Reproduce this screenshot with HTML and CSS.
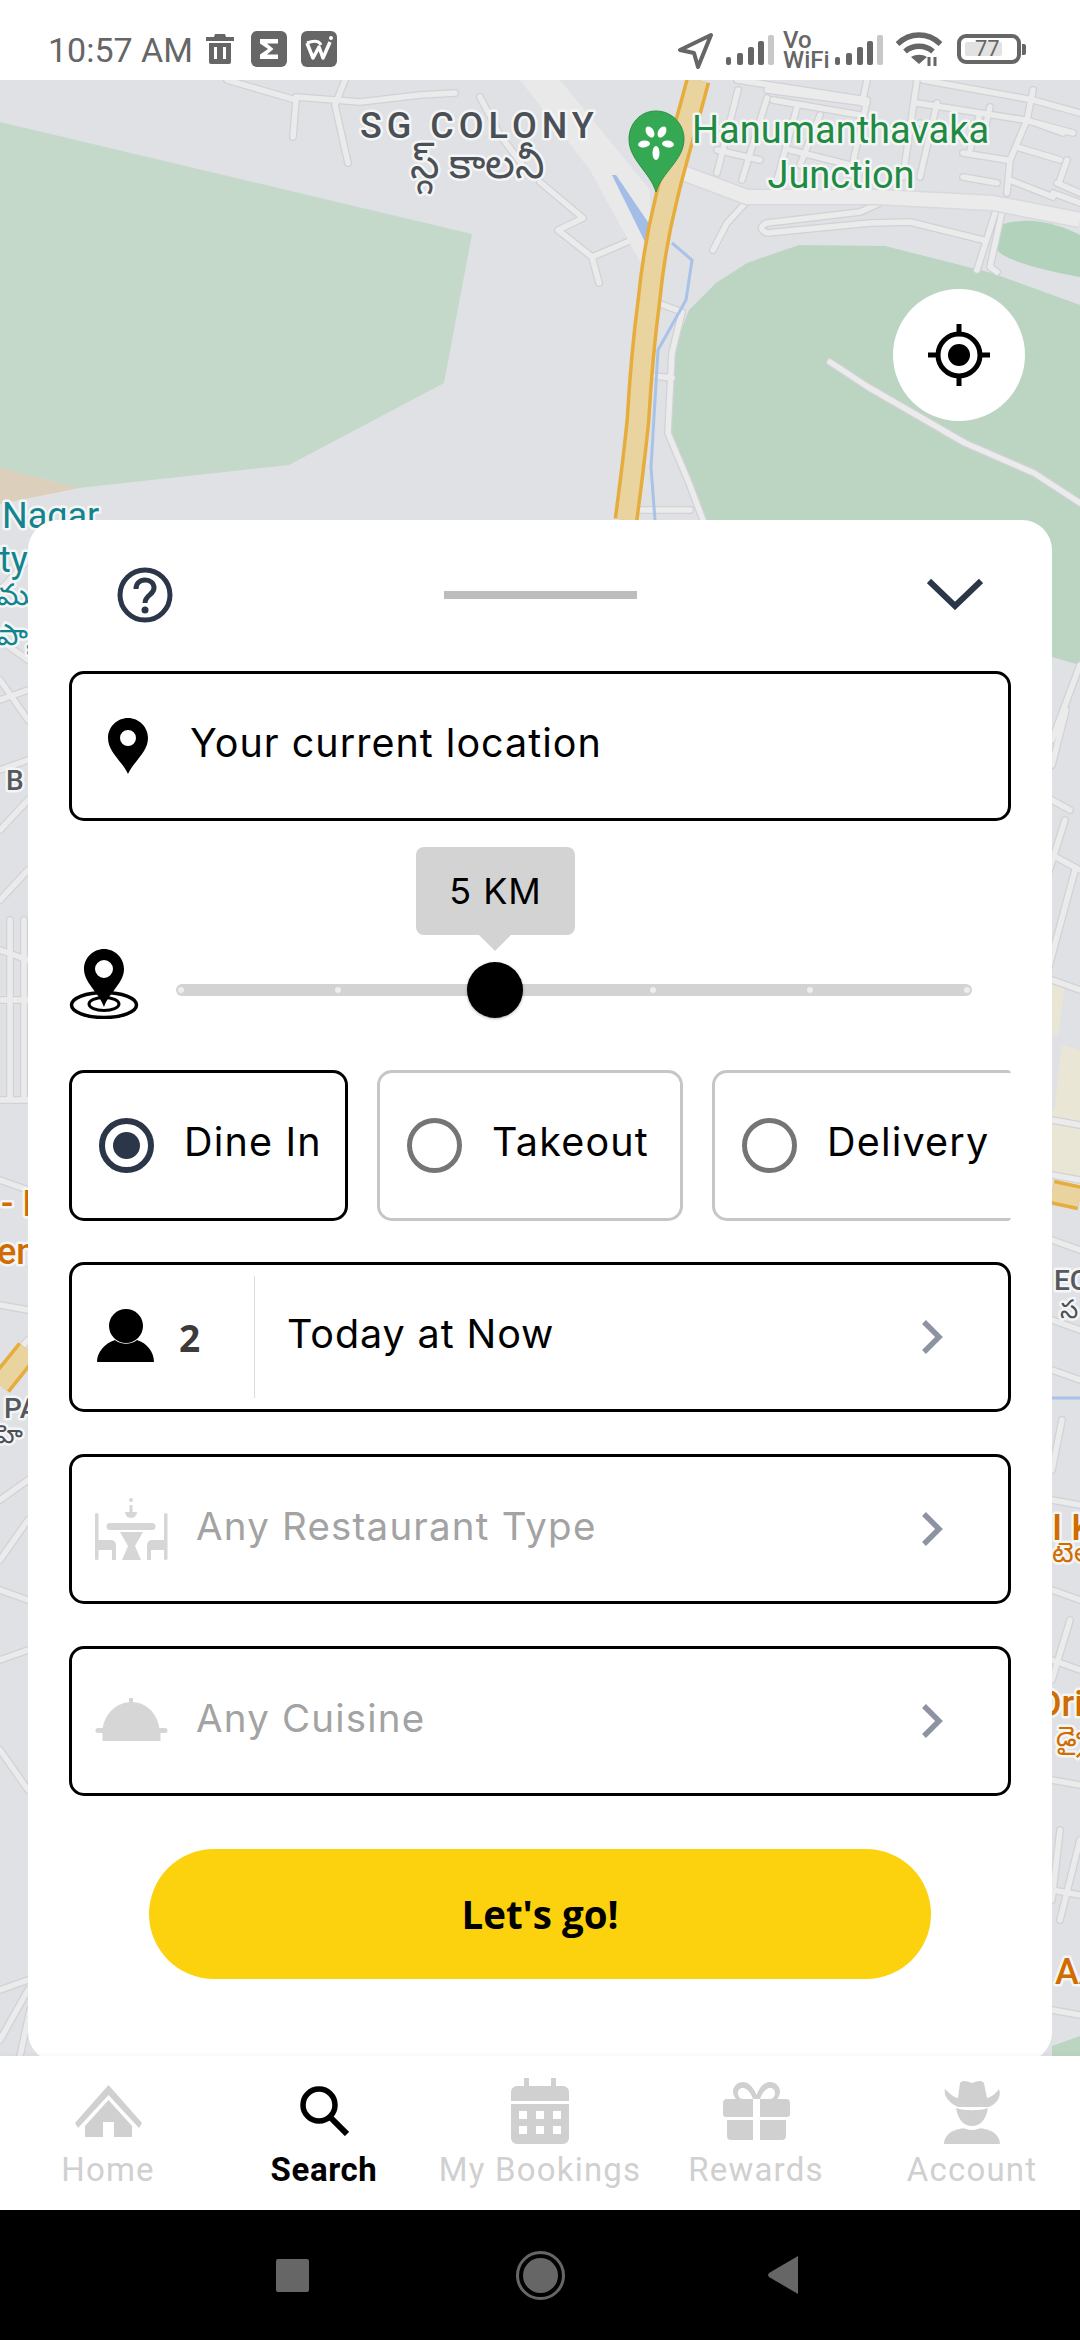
FILE: index.html
```html
<!DOCTYPE html>
<html lang="en">
<head>
<meta charset="utf-8">
<title>Search</title>
<link rel="stylesheet" href="styles.css">
</head>
<body>
<div class="screen">
  <header class="status">
    <div class="status-left">
      <span class="clock">10:57 AM</span>
      <svg class="st-trash" viewBox="0 0 28 30"><path d="M9 0h10l1 3h8v4H0V3h8zM3 9h22v19a2 2 0 0 1-2 2H5a2 2 0 0 1-2-2zm5 4v12h3V13zm9 0v12h3V13z" fill="#666"/></svg>
      <span class="tile"><svg viewBox="0 0 36 36"><path d="M9 8h18v4.500H16l6.500 5.500-6.500 5.500h11V28H9v-4.500l8-5.500-8-5.500z" fill="#fff"/></svg></span>
      <span class="tile"><svg viewBox="0 0 36 36"><path d="M6 12l6 15 6-11 4 11 7-16" fill="none" stroke="#fff" stroke-width="3.500" stroke-linejoin="round"/><path d="M6 12c8-3 12-2 14 2" fill="none" stroke="#fff" stroke-width="3"/><circle cx="30" cy="7" r="2" fill="#fff"/></svg></span>
    </div>
    <div class="status-right">
      <svg class="st-arrow" viewBox="0 0 37 37"><path d="M34 3L3 18l14 3 4 14z" fill="none" stroke="#666" stroke-width="4" stroke-linejoin="round"/></svg>
      <svg class="st-signal" viewBox="0 0 48 30"><g fill="#666"><rect x="0" y="22" width="5" height="8" rx="2"/><rect x="11" y="18" width="6" height="12" rx="2"/><rect x="22" y="12" width="6" height="18" rx="2"/><rect x="32" y="6" width="6" height="24" rx="2"/></g><rect x="42" y="0" width="6" height="30" rx="2" fill="#c8c8c8"/></svg>
      <span class="vowifi"><span>Vo</span><span>WiFi</span></span>
      <svg class="st-signal" viewBox="0 0 48 30"><g fill="#666"><rect x="0" y="22" width="5" height="8" rx="2"/><rect x="11" y="18" width="6" height="12" rx="2"/><rect x="22" y="12" width="6" height="18" rx="2"/><rect x="32" y="6" width="6" height="24" rx="2"/></g><rect x="42" y="0" width="6" height="30" rx="2" fill="#c8c8c8"/></svg>
      <svg class="st-wifi" viewBox="0 0 46 34"><g fill="none" stroke="#666" stroke-width="5.500"><path d="M1.500 12C14 0 32 0 44.500 12"/><path d="M9 19.500c8-7 20-7 28 0"/></g><path d="M15 25c5-3 11-3 16 0l-8 7z" fill="#666"/><path d="M33 25v9M39 25v9" stroke="#666" stroke-width="3"/></svg>
      <span class="battery"><span class="battery-fill"></span><span class="battery-num">77</span></span>
      <span class="battery-tip"></span>
    </div>
  </header>

  <main class="stage">
    <svg class="map" viewBox="0 80 1080 1976" preserveAspectRatio="none">
      <defs>
        <g id="minor">
          <path d="M227 80L296 100L293 137M296 97L360 102L420 95L455 93M345 80L335 105L348 163M480 97L500 135L530 175M579 220L558 230L592 257L599 283M592 257L632 240L625 225M540 182L583 218L579 220"/>
          <path d="M767 223L860 212L880 203M767 223Q756 228 767 233L870 223L910 222L983 240M750 198L727 223L713 250M997 207L977 270M1003 207L990 267L997 272"/>
          <path d="M738 90L717 173M767 98L742 180M797 107L777 180M867 80L862 103M917 80L903 177M937 103L920 177M990 107L983 137M1033 90L1027 120L1010 160L1007 193M1067 160L1060 180M820 115L800 165M866 105L850 175"/>
          <path d="M737 80L867 100M767 90L867 103M773 100L860 115M923 80L1033 100L1080 113M917 103L980 113L1025 120L1073 133M920 123L960 137M1017 147L1060 160M963 153L1007 160M963 177L997 183M1010 180L1053 197M1053 193L1080 203M1057 183L1080 193M1027 120L1063 133M980 113L970 150M717 150L760 160M790 150L850 165"/>
          <path d="M658 303L682 312L672 353L668 433L689 483L703 520M830 362L868 387L965 443L1034 473L1080 503M634 510L690 510M655 376L672 378"/>
          <path d="M0 590L28 560M0 640L28 660M0 680L28 720M0 700L28 690M0 770L28 760M0 830L28 800M0 900L28 870M0 950L28 960M10 920L10 1100M24 920L24 1100M0 1100L28 1100M0 1000L28 1000M0 1180L28 1190M0 1305L28 1310M0 1370L28 1340M0 1500L28 1480M0 1560L28 1520M0 1590L28 1600M0 1660L28 1650M0 1750L28 1790M0 1990L28 1980M0 2040L28 1990M20 2056L30 2010"/>
          <path d="M1052 740L1080 665M1052 765L1066 710M1052 800L1070 810M1052 855L1080 870M1065 820L1040 900M1052 980L1080 990M1075 870L1040 1000M1052 1120L1080 1125M1052 1175L1080 1180M1052 1240L1080 1250M1052 1320L1080 1330M1052 1370L1080 1380M1062 1420L1052 1470M1052 1500L1080 1505M1052 1590L1080 1600M1070 1620L1052 1680M1052 1660L1080 1670M1052 1780L1080 1785M1060 1830L1052 1900M1080 1840L1060 1920M1052 1890L1080 1895M1052 2010L1080 2015"/>
        </g>
        <g id="major">
          <path d="M683 173L747 197L877 197L993 203L1080 220"/>
        </g>
      </defs>
      <rect class="m-land" x="0" y="80" width="1080" height="1976"/>
      <path class="m-green-a" d="M0 122L472 234L444 383L289 465L79 488L0 468z"/>
      <path class="m-beige" d="M0 468L79 488L0 504z"/>
      <path class="m-green-b" d="M799 245L885 246L992 273L1080 305V665L1052 657L703 520L672 433V353L689 310L716 283L747 263z"/>
      <path class="m-green-c" d="M1000 225C1030 215 1060 225 1080 235V277C1040 270 1005 260 997 250z"/>
      <path class="m-green-b" d="M1052 2056V2046L1080 2036V2056z"/>
      <path class="m-beige2" d="M1052 985H1065L1058 1035H1052zM1052 1130L1062 1045L1080 1050V1120L1070 1140zM1052 1110L1080 1120V1190L1052 1180z"/>
      <use href="#minor" class="m-casing"/>
      <use href="#minor" class="m-road"/>
      <use href="#major" class="m-casing-major"/>
      <use href="#major" class="m-road-major"/>
      <path class="m-band" d="M520 80H560L650 190V262L640 262L590 170z"/>
      <path class="m-water" d="M612 175L616 175L652 228L648 248z"/>
      <path class="m-stream" d="M672 243L692 260L686 300L658 350L651 467L655 520M1052 1398H1080"/>
      <path class="m-hw-edge" d="M698 80C685 130 674 165 666 200C656 240 652 270 649 300C643 345 640 385 638 420C634 460 630 490 626 520"/>
      <path class="m-hw" d="M698 80C685 130 674 165 666 200C656 240 652 270 649 300C643 345 640 385 638 420C634 460 630 490 626 520"/>
      <path class="m-hw-edge" d="M0 1385L28 1350M1052 1192L1080 1198"/>
      <path class="m-hw" d="M0 1385L28 1350M1052 1192L1080 1198"/>
      <path class="m-pin" d="M656 111C640 111 629 124 629 139C629 160 650 172 656 192C662 172 684 160 684 139C684 124 672 111 656 111z"/>
      <g class="m-petal"><ellipse cx="656" cy="153" rx="3.500" ry="7"/><ellipse cx="644" cy="144" rx="6" ry="3.500" transform="rotate(-8 644 144)"/><ellipse cx="668" cy="144" rx="6" ry="3.500" transform="rotate(8 668 144)"/><ellipse cx="650" cy="132" rx="3.800" ry="6" transform="rotate(-30 650 132)"/><ellipse cx="662" cy="132" rx="3.800" ry="6" transform="rotate(30 662 132)"/></g>
      <text class="m-t m-area" x="360" y="138">SG COLONY</text>
      <text class="m-t m-tel m-grey" x="477" y="178" text-anchor="middle">స్గ్ కాలనీ</text>
      <text class="m-t m-poi" x="692" y="143">Hanumanthavaka</text>
      <text class="m-t m-poi" x="841" y="188" text-anchor="middle">Junction</text>
      <text class="m-t m-teal" x="2" y="528">Nagar</text>
      <text class="m-t m-teal" x="-1" y="572">ty</text>
      <text class="m-t m-tel m-teal2" x="-3" y="605">ముఖ్య</text>
      <text class="m-t m-tel m-teal2" x="-3" y="645">ప్యా</text>
      <text class="m-t m-b" x="6" y="790">B</text>
      <text class="m-t m-orange" x="1" y="1216">- I</text>
      <text class="m-t m-orange" x="-3" y="1264">en</text>
      <text class="m-t m-b" x="4" y="1418">PA</text>
      <text class="m-t m-tel m-grey2" x="-4" y="1443">హె</text>
      <text class="m-t m-b" x="1054" y="1290">EC</text>
      <text class="m-t m-tel m-grey2" x="1060" y="1318">స</text>
      <text class="m-t m-orange" x="1052" y="1540">I K</text>
      <text class="m-t m-tel m-or2" x="1052" y="1562">టెల</text>
      <text class="m-t m-orange" x="1038" y="1716">Dri</text>
      <text class="m-t m-tel m-or2" x="1056" y="1746">డ్రై</text>
      <text class="m-t m-orange" x="1055" y="1984">AA</text>
    </svg>

    <button class="locate" type="button">
      <svg viewBox="0 0 62 62"><circle cx="31" cy="31" r="21" fill="none" stroke="#000" stroke-width="5"/><circle cx="31" cy="31" r="11" fill="#000"/><path d="M31 0v12M31 50v12M0 31h12M50 31h12" stroke="#000" stroke-width="5"/></svg>
    </button>

    <section class="sheet">
      <div class="sheet-head">
        <svg class="help" viewBox="0 0 56 56"><circle cx="28" cy="28" r="25" fill="none" stroke="#2b3648" stroke-width="5"/><path d="M19 22c0-6 4-9 9-9s9 3 9 8c0 7-9 7-9 15" fill="none" stroke="#2b3648" stroke-width="5"/><circle cx="28" cy="43" r="3.500" fill="#2b3648"/></svg>
        <span class="grabber"></span>
        <svg class="collapse" viewBox="0 0 56 32"><path d="M2 3l26 25L54 3" fill="none" stroke="#2b3648" stroke-width="6"/></svg>
      </div>

      <div class="field">
        <svg class="i-pin" viewBox="0 0 40 56"><path fill-rule="evenodd" d="M20 0C9 0 0 9 0 20c0 14 14 23 20 36 6-13 20-22 20-36C40 9 31 0 20 0zm0 12a8 8 0 1 1 0 16 8 8 0 0 1 0-16z" fill="#000"/></svg>
        <span class="field-text">Your current location</span>
      </div>

      <div class="slider">
        <svg class="i-radius" viewBox="0 0 70 70"><path fill-rule="evenodd" d="M35 0C24 0 15 9 15 20c0 14 14 22 20 38 6-16 20-24 20-38C55 9 46 0 35 0zm0 11a9 9 0 1 1 0 18 9 9 0 0 1 0-18z" fill="#000"/><ellipse cx="35" cy="56" rx="32.500" ry="12.500" fill="none" stroke="#000" stroke-width="3.500"/><ellipse cx="35" cy="55" rx="15" ry="6.500" fill="none" stroke="#000" stroke-width="3"/></svg>
        <div class="track">
          <span class="tick"></span><span class="tick"></span><span class="tick tick-hidden"></span><span class="tick"></span><span class="tick"></span><span class="tick"></span>
          <span class="thumb"></span>
          <span class="bubble">5 KM</span>
        </div>
      </div>

      <div class="modes">
        <div class="mode mode-dine mode-on"><span class="radio radio-on"></span><span class="mode-label">Dine In</span></div>
        <div class="mode mode-take"><span class="radio"></span><span class="mode-label">Takeout</span></div>
        <div class="mode mode-deliv"><span class="radio"></span><span class="mode-label">Delivery</span></div>
      </div>

      <div class="rows">
        <div class="row">
          <div class="party">
            <svg class="i-person" viewBox="0 0 57 53"><circle cx="29" cy="17" r="17" fill="#000"/><path d="M18 31c6 5 16 5 22 0 10 3 17 12 17 22H0c0-10 8-19 18-22z" fill="#000"/></svg>
            <span class="party-num">2</span>
          </div>
          <span class="row-text row-text-when">Today at Now</span>
          <svg class="chev" viewBox="0 0 22 34"><path d="M3 2l15 15L3 32" fill="none" stroke="#8e93a3" stroke-width="5.500"/></svg>
        </div>
        <div class="row">
          <svg class="i-table" viewBox="0 0 73 62"><g fill="#d6d6d6"><rect x="34" y="0" width="4" height="4" rx="2"/><rect x="34.500" y="7" width="3" height="8"/><path d="M30 14h12a6 6 0 0 1-12 0z"/><path d="M15 25h42a3.500 3.500 0 0 1 0 7H15a3.500 3.500 0 0 1 0-7z"/><path d="M25 34h23l-8 14 6 14H27l6-14z"/><rect x="0" y="15" width="3.500" height="47" rx="1.500"/><rect x="69" y="15" width="3.500" height="47" rx="1.500"/><path d="M3 42h13a5 5 0 0 1 5 5v15h-4V52H3zM69 42H57a5 5 0 0 0-5 5v15h4V52h13z"/></g></svg>
          <span class="row-text row-text-muted">Any Restaurant Type</span>
          <svg class="chev" viewBox="0 0 22 34"><path d="M3 2l15 15L3 32" fill="none" stroke="#8e93a3" stroke-width="5.500"/></svg>
        </div>
        <div class="row">
          <svg class="i-cloche" viewBox="0 0 72 43"><g fill="#d6d6d6"><rect x="33.500" y="0" width="4" height="6"/><path d="M36 4c14 0 26 11 28 27H7C9 15 22 4 36 4z"/><rect x="0" y="30" width="72" height="5" rx="2.500"/><rect x="7" y="35" width="58" height="8"/></g></svg>
          <span class="row-text row-text-muted">Any Cuisine</span>
          <svg class="chev" viewBox="0 0 22 34"><path d="M3 2l15 15L3 32" fill="none" stroke="#8e93a3" stroke-width="5.500"/></svg>
        </div>
      </div>

      <button class="go" type="button">Let's go!</button>
    </section>
  </main>

  <nav class="tabs">
    <div class="tab">
      <span class="tab-icon"><svg class="ti-home" viewBox="0 0 67 52"><g fill="#d0d0d0"><path d="M33.500 0L67 38l-3 5L33.500 10 3 43l-3-5z"/><path d="M33.500 15L57 41v11H39V37H28v15H10V41z"/></g></svg></span>
      <span class="tab-label">Home</span>
    </div>
    <div class="tab tab-on">
      <span class="tab-icon"><svg class="ti-search" viewBox="0 0 50 50"><circle cx="20" cy="19" r="16" fill="none" stroke="#000" stroke-width="5.500"/><path d="M31 31l17 17" stroke="#000" stroke-width="6"/></svg></span>
      <span class="tab-label">Search</span>
    </div>
    <div class="tab">
      <span class="tab-icon"><svg class="ti-cal" viewBox="0 0 58 66"><path fill-rule="evenodd" fill="#d0d0d0" d="M13 0h5v8h22V0h5v8h7a6 6 0 0 1 6 6v9H0v-9a6 6 0 0 1 6-6h7zM0 26h58v34a6 6 0 0 1-6 6H6a6 6 0 0 1-6-6zm8 7v8h8v-8zm17 0v8h8v-8zm17 0v8h8v-8zM8 48v8h8v-8zm17 0v8h8v-8zm17 0v8h8v-8z"/></svg></span>
      <span class="tab-label">My Bookings</span>
    </div>
    <div class="tab">
      <span class="tab-icon"><svg class="ti-gift" viewBox="0 0 67 58"><g fill="#d0d0d0"><path fill-rule="evenodd" d="M33.500 13C30 4 25 0 20 0c-6 0-10 5-10 9 0 3 1 6 3 8H4a4 4 0 0 0-4 4v11a3 3 0 0 0 3 3h27V17h7v18h27a3 3 0 0 0 3-3V21a4 4 0 0 0-4-4h-9c2-2 3-5 3-8 0-4-4-9-10-9-5 0-10 4-13.500 13zM20 6c4 0 8 5 10 11H20c-3 0-5-3-5-6s2-5 5-5zm27 0c3 0 5 2 5 5s-2 6-5 6H37c2-6 6-11 10-11z"/><path d="M4 38h26v20H8a4 4 0 0 1-4-4zM37 38h26v16a4 4 0 0 1-4 4H37z"/></g></svg></span>
      <span class="tab-label">Rewards</span>
    </div>
    <div class="tab">
      <span class="tab-icon"><svg class="ti-acc" viewBox="0 0 58 66"><g fill="#d0d0d0"><path d="M17 5c3-3 6-2 12 0 6-2 9-3 12 0l3 15c5-1 9-5 12-9 3 8-3 15-10 18H15C8 26 0 19 2 11c4 4 8 8 13 9z"/><path d="M13 30c8 3 24 3 32 0-2 11-7 18-16 18S15 41 13 30z"/><path d="M29 52c6 0 9-3 12-1 9 1 16 7 16 15H1c0-8 7-14 16-15 3-2 6 1 12 1z"/></g></svg></span>
      <span class="tab-label">Account</span>
    </div>
  </nav>

  <footer class="sysbar">
    <span class="sys-square"></span>
    <span class="sys-home"><span class="sys-home-dot"></span></span>
    <svg class="sys-back" viewBox="0 0 32 38"><path d="M31 0v38L2 21a3 3 0 0 1 0-4z" fill="#666"/></svg>
  </footer>
</div>
</body>
</html>
```

FILE: styles.css
```css
* { box-sizing: border-box; }
html, body { margin: 0; padding: 0; }
body { width: 1080px; height: 2340px; overflow: hidden; font-family: "Inter", "Noto Sans", sans-serif; background: #fff; }
.screen { width: 1080px; height: 2340px; display: flex; flex-direction: column; }

/* status bar */
.status { height: 80px; flex: none; display: flex; justify-content: space-between; background: #fff; color: #666; padding: 31px 54px 0 48px; }
.status-left { display: flex; align-items: flex-start; }
.clock { font: 400 34px/37px "Roboto", sans-serif; margin-top: 1px; }
.st-trash { width: 28px; height: 30px; margin: 3px 0 0 13px; }
.tile { width: 36px; height: 36px; border-radius: 6px; background: #666; margin-left: 17px; display: block; }
.tile svg { display: block; width: 36px; height: 36px; }
.tile + .tile { margin-left: 14px; }
.status-right { display: flex; align-items: flex-start; }
.st-arrow { width: 37px; height: 37px; margin-top: 1px; }
.st-signal { width: 48px; height: 30px; margin: 4px 0 0 12px; }
.vowifi { display: flex; flex-direction: column; width: 44px; margin-left: 9px; font: 500 24px/20px "Roboto", sans-serif; margin-top: -1px; color: #666; white-space: nowrap; }
.vowifi + .st-signal { margin-left: 8px; }
.st-wifi { width: 46px; height: 34px; margin: 1px 0 0 13px; }
.battery { width: 64px; height: 30px; margin: 3px 0 0 15px; border: 4px solid #666; border-radius: 9px; position: relative; display: block; }
.battery-fill { display: block; width: 37px; height: 14px; margin: 4px 0 0 4px; background: #e2e2e2; border-radius: 2px; }
.battery-num { position: absolute; left: 14px; top: 0; font: 400 22px/22px "Roboto", sans-serif; color: #666; }
.battery-tip { width: 4px; height: 11px; margin: 13px 0 0 1px; background: #666; border-radius: 0 2px 2px 0; }

/* stage with map */
.stage { position: relative; flex: none; height: 1976px; overflow: hidden; background: #dfe1e4; }
.map { position: absolute; left: 0; top: 0; width: 1080px; height: 1976px; display: block; }
.m-land { fill: #dfe1e4; }
.m-green-a { fill: #c4d9ca; }
.m-green-b { fill: #bcd5c2; }
.m-green-c { fill: #b3d2bb; }
.m-beige { fill: #dccfbb; }
.m-beige2 { fill: #e9e6d6; }
.m-casing { fill: none; stroke: #d0d2d6; stroke-width: 8; stroke-linejoin: round; stroke-linecap: round; }
.m-road { fill: none; stroke: #ebebec; stroke-width: 5.500; stroke-linejoin: round; stroke-linecap: round; }
.m-casing-major { fill: none; stroke: #d8d9dc; stroke-width: 17; stroke-linejoin: round; }
.m-road-major { fill: none; stroke: #ebebec; stroke-width: 14; stroke-linejoin: round; }
.m-band { fill: #e9e9ea; }
.m-water { fill: #a3bde6; }
.m-stream { fill: none; stroke: #a9c2e8; stroke-width: 3; }
.m-hw-edge { fill: none; stroke: #e6ac3c; stroke-width: 25; }
.m-hw { fill: none; stroke: #e9d4a0; stroke-width: 18; }
.m-pin { fill: #34a853; stroke: #2c9148; stroke-width: 1; }
.m-petal { fill: #fff; }
.m-t { paint-order: stroke; stroke: #f4f5f5; stroke-width: 5px; stroke-linejoin: round; font-family: "Roboto", "Noto Sans", sans-serif; }
.m-area { font-size: 36px; font-weight: 500; letter-spacing: 5px; fill: #4b4f56; }
.m-tel { font-family: "Noto Sans", "DejaVu Sans", sans-serif; font-size: 42px; }
.m-grey { fill: #4b4f56; }
.m-grey2 { fill: #4b4f56; font-size: 26px; }
.m-poi { font-size: 38px; fill: #1e8a43; }
.m-teal { font-size: 36px; fill: #12848f; }
.m-teal2 { font-size: 30px; fill: #12848f; }
.m-b { font-size: 28px; font-weight: 500; fill: #55585e; }
.m-orange { font-size: 36px; font-weight: 500; fill: #d06c00; }
.m-or2 { font-size: 28px; fill: #d06c00; }

.locate { position: absolute; left: 893px; top: 209px; width: 132px; height: 132px; border: 0; padding: 0; border-radius: 50%; background: #fff; display: flex; align-items: center; justify-content: center; }
.locate svg { width: 62px; height: 62px; display: block; }

/* sheet */
.sheet { position: absolute; left: 28px; top: 440px; width: 1024px; height: 1542px; background: #fff; border-radius: 30px; padding: 0 41px; }
.sheet-head { height: 151px; display: grid; grid-template-columns: 1fr auto 1fr; align-items: center; padding-bottom: 2px; }
.help { width: 56px; height: 56px; display: block; margin-left: 48px; }
.grabber { width: 193px; height: 8px; background: #bdbdbd; display: block; }
.collapse { width: 56px; height: 32px; display: block; justify-self: end; margin: 0 28px 2px 0; }

.field { height: 150px; border: 3.500px solid #000; border-radius: 15px; display: flex; align-items: center; padding: 0 0 0 36px; }
.i-pin { width: 40px; height: 56px; flex: none; }
.field-text { margin-left: 42px; font-size: 39.500px; color: #000; padding-bottom: 6px; letter-spacing: 1px; }

.slider { height: 249px; display: flex; align-items: flex-start; padding-top: 128px; }
.i-radius { width: 70px; height: 70px; flex: none; }
.track { position: relative; margin: 35px 0 0 37px; width: 796px; height: 12px; border-radius: 6px; background: #d3d3d3; display: flex; justify-content: space-between; align-items: center; padding: 0 2px; }
.tick { width: 6px; height: 6px; border-radius: 50%; background: #eeeeee; }
.tick-hidden { visibility: hidden; }
.thumb { position: absolute; left: 291px; top: -22px; width: 56px; height: 56px; border-radius: 50%; background: #000; box-shadow: 0 1px 3px rgba(0,0,0,.3); }
.bubble { position: absolute; left: 240px; top: -137px; width: 159px; height: 88px; background: #d3d3d3; border-radius: 8px; display: flex; align-items: center; justify-content: center; font-size: 36px; letter-spacing: 1px; color: #000; }
.bubble::after { content: ""; position: absolute; left: 63px; top: 88px; border-left: 16px solid transparent; border-right: 16px solid transparent; border-top: 16px solid #d3d3d3; }

.modes { display: flex; gap: 29px; height: 151px; overflow: hidden; border-radius: 4px; }
.mode { flex: none; height: 151px; border: 3px solid #c4c6c8; border-radius: 15px; display: flex; align-items: center; }
.mode-on { border: 3.500px solid #000; }
.mode-dine { width: 279px; padding-left: 27px; }
.mode-take { width: 306px; padding-left: 27px; }
.mode-deliv { width: 340px; padding-left: 27px; }
.radio { width: 55px; height: 55px; flex: none; border-radius: 50%; border: 5.500px solid #757575; display: flex; align-items: center; justify-content: center; }
.radio-on { border: 6px solid #2b3648; }
.radio-on::before { content: ""; width: 27px; height: 27px; border-radius: 50%; background: #2b3648; }
.mode-label { margin-left: 30px; font-size: 39.500px; letter-spacing: 1.200px; color: #000; padding-bottom: 8px; white-space: nowrap; }

.rows { display: flex; flex-direction: column; gap: 42px; margin-top: 41px; }
.row { position: relative; height: 150px; border: 3.500px solid #000; border-radius: 15px; display: flex; align-items: center; padding: 0 65px 0 23px; }
.party { width: 160px; height: 122px; flex: none; display: flex; align-items: center; border-right: 1px solid #dcdcdc; padding-left: 2px; }
.i-person { width: 57px; height: 53px; flex: none; margin-top: -4px; }
.party-num { margin-left: 25px; font: 700 37px/1 "Open Sans", sans-serif; color: #3b3b3b; }
.row-text { font-size: 39.500px; letter-spacing: .9px; flex: 1; padding-bottom: 6px; white-space: nowrap; }
.row-text-when { margin-left: 32px; color: #000; }
.row-text-muted { margin-left: 28px; color: #a3a3a3; font-size: 38.500px; letter-spacing: 1.200px; }
.i-table, .i-cloche { width: 73px; flex: none; margin-left: 0; }
.i-table { height: 62px; }
.i-cloche { height: 43px; margin-top: -4px; }
.chev { width: 22px; height: 34px; flex: none; }

.go { display: block; width: 782px; height: 130px; margin: 53px auto 0; border: 0; border-radius: 65px; background: #fbd20d; font: 700 38.500px/1 "Open Sans", sans-serif; color: #000; }

/* bottom tabs */
.tabs { position: relative; flex: none; height: 154px; display: flex; background: #fff; padding-top: 22px; box-shadow: 0 -3px 4px rgba(0,0,0,.025); }
.tab { flex: 1; display: flex; flex-direction: column; align-items: center; }
.tab-icon { height: 66px; display: flex; align-items: center; justify-content: center; }
.tab-icon svg { display: block; }
.ti-home { width: 67px; height: 52px; }
.ti-search { width: 50px; height: 50px; }
.ti-cal { width: 58px; height: 66px; }
.ti-gift { width: 67px; height: 58px; }
.ti-acc { width: 58px; height: 66px; }
.tab-label { margin-top: 6px; font: 400 33px/40px "Roboto", sans-serif; letter-spacing: 1.200px; color: #d0d0d0; white-space: nowrap; }
.tab-on .tab-label { color: #000; font-weight: 700; letter-spacing: .6px; }

/* system nav */
.sysbar { flex: none; height: 130px; background: #000; position: relative; display: flex; align-items: center; padding-left: 276px; }
.sys-square { width: 33px; height: 33px; background: #666; border-radius: 2px; }
.sys-home { width: 49px; height: 49px; margin-left: 207px; border: 3.500px solid #666; border-radius: 50%; display: flex; align-items: center; justify-content: center; }
.sys-home-dot { width: 35px; height: 35px; border-radius: 50%; background: #666; }
.sys-back { width: 32px; height: 38px; margin-left: 202px; }
```
